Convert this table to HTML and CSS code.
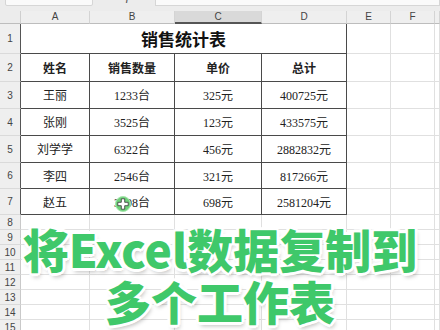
FILE: index.html
```html
<!DOCTYPE html>
<html lang="zh">
<head>
<meta charset="utf-8">
<link rel="stylesheet" href="styles.css">
</head>
<body>
<div class="page">
  <div class="toolbar">
    <div class="namebox">C10</div>
    <div class="tools"><span class="zoomglass">&#x2315;</span><span class="fx">fx</span></div>
    <div class="formula"></div>
  </div>
  <div class="strip"></div>
  <div class="sheet">
    <div class="corner"></div>
    <div class="ch">A</div><div class="ch">B</div><div class="ch sel">C</div><div class="ch">D</div><div class="ch">E</div><div class="ch">F</div><div class="ch"></div>

    <div class="rh t">1</div>
    <div class="tc title">销售统计表</div>
    <div class="c"></div><div class="c"></div><div class="c"></div>

    <div class="rh t">2</div>
    <div class="tc hd">姓名</div><div class="tc hd">销售数量</div><div class="tc hd">单价</div><div class="tc hd">总计</div>
    <div class="c"></div><div class="c"></div><div class="c"></div>

    <div class="rh t">3</div>
    <div class="tc">王丽</div><div class="tc">1233台</div><div class="tc">325元</div><div class="tc">400725元</div>
    <div class="c"></div><div class="c"></div><div class="c"></div>

    <div class="rh t">4</div>
    <div class="tc">张刚</div><div class="tc">3525台</div><div class="tc">123元</div><div class="tc">433575元</div>
    <div class="c"></div><div class="c"></div><div class="c"></div>

    <div class="rh t">5</div>
    <div class="tc">刘学学</div><div class="tc">6322台</div><div class="tc">456元</div><div class="tc">2882832元</div>
    <div class="c"></div><div class="c"></div><div class="c"></div>

    <div class="rh t">6</div>
    <div class="tc">李四</div><div class="tc">2546台</div><div class="tc">321元</div><div class="tc">817266元</div>
    <div class="c"></div><div class="c"></div><div class="c"></div>

    <div class="rh t">7</div>
    <div class="tc">赵五</div><div class="tc">3698台</div><div class="tc">698元</div><div class="tc">2581204元</div>
    <div class="c"></div><div class="c"></div><div class="c"></div>

    <div class="rh">8</div><div class="c"></div><div class="c"></div><div class="c"></div><div class="c"></div><div class="c"></div><div class="c"></div><div class="c"></div>
    <div class="rh">9</div><div class="c"></div><div class="c"></div><div class="c"></div><div class="c"></div><div class="c"></div><div class="c"></div><div class="c"></div>
    <div class="rh">10</div><div class="c"></div><div class="c"></div><div class="c"></div><div class="c"></div><div class="c"></div><div class="c"></div><div class="c"></div>
    <div class="rh">11</div><div class="c"></div><div class="c"></div><div class="c"></div><div class="c"></div><div class="c"></div><div class="c"></div><div class="c"></div>
    <div class="rh">12</div><div class="c"></div><div class="c"></div><div class="c"></div><div class="c"></div><div class="c"></div><div class="c"></div><div class="c"></div>
    <div class="rh">13</div><div class="c"></div><div class="c"></div><div class="c"></div><div class="c"></div><div class="c"></div><div class="c"></div><div class="c"></div>
    <div class="rh">14</div><div class="c"></div><div class="c"></div><div class="c"></div><div class="c"></div><div class="c"></div><div class="c"></div><div class="c"></div>
    <div class="rh">15</div><div class="c"></div><div class="c"></div><div class="c"></div><div class="c"></div><div class="c"></div><div class="c"></div><div class="c"></div>
  </div>

  <svg class="cursor" width="18" height="18" viewBox="0 0 18 18">
    <circle cx="9" cy="9" r="7.5" fill="#6fd27a" stroke="#a8e6ae" stroke-width="1"/>
    <path d="M7.3 3.8h3.4v3.5h3.5v3.4h-3.5v3.5H7.3v-3.5H3.8V7.3h3.5z" fill="#fff" stroke="#333" stroke-width="0.8"/>
  </svg>

  <div class="overlay">
    <div class="line1">将Excel数据复制到</div>
    <div class="line2">多个工作表</div>
  </div>
</div>
</body>
</html>
```

FILE: styles.css
```css
html, body {
  margin: 0;
  padding: 0;
  background: #ffffff;
  overflow: hidden;
}
.page {
  position: relative;
  width: 440px;
  height: 330px;
  overflow: hidden;
  font-family: "Liberation Sans", "Noto Sans CJK SC", sans-serif;
}
.toolbar {
  height: 7px;
  display: flex;
  align-items: flex-end;
  overflow: hidden;
  background: #ececec;
}
.namebox {
  margin-left: 5px;
  width: 88px;
  height: 18px;
  flex: none;
  background: #fafafa;
  border: 1px solid #d6d6d6;
  border-radius: 2px;
  box-sizing: border-box;
  font-size: 11px;
  line-height: 12px;
  text-align: center;
  color: #555;
  margin-bottom: 1px;
}
.tools {
  width: 62px;
  flex: none;
  display: flex;
  justify-content: center;
  gap: 6px;
  font-size: 13px;
  line-height: 13px;
  color: #555;
  height: 18px;
}
.fx {
  font-family: "Liberation Serif", serif;
  font-style: italic;
}
.formula {
  flex: 1;
  height: 18px;
  background: #fafafa;
  border: 1px solid #d6d6d6;
  box-sizing: border-box;
  margin-bottom: 1px;
}
.strip {
  height: 4px;
  background: #ececec;
}
.sheet {
  display: grid;
  grid-template-columns: 21px 69px 85px 87px 85px 44px 44px 1fr;
  grid-template-rows: 13px 30px 28px 27px 27px 27px 26px 26px repeat(8, 15px);
}
.sheet > div {
  box-sizing: border-box;
}
.corner {
  background: #ececec;
  border-right: 1px solid #cfcfcf;
  border-bottom: 1px solid #bdbdbd;
}
.ch {
  background: #efefef;
  border-right: 1px solid #d4d4d4;
  border-bottom: 1px solid #bdbdbd;
  font-size: 10px;
  line-height: 12px;
  text-align: center;
  color: #444;
}
.ch.sel {
  background: #d9d9d9;
  border-bottom: 2px solid #555;
}
.rh {
  background: #efefef;
  border-right: 1px solid #c9c9c9;
  border-bottom: 1px solid #dadada;
  font-size: 10px;
  color: #444;
  display: flex;
  align-items: center;
  justify-content: center;
}
.rh.t {
  border-right: 1px solid #555;
}
.c {
  border-right: 1px solid #e0e0e0;
  border-bottom: 1px solid #e0e0e0;
}
.tc {
  border-right: 1px solid #4a4a4a;
  border-bottom: 1px solid #4a4a4a;
  display: flex;
  align-items: center;
  justify-content: center;
  font-family: "Liberation Serif", "Noto Sans CJK SC", serif;
  font-size: 12px;
  color: #222;
}
.tc.hd {
  font-weight: 700;
  font-size: 12px;
}
.tc.title {
  grid-column: span 4;
  font-weight: 700;
  font-size: 17px;
  color: #111;
}
.cursor {
  position: absolute;
  left: 114px;
  top: 195px;
}
.overlay {
  position: absolute;
  left: 0;
  top: 222px;
  width: 440px;
  text-align: center;
  font-family: "Noto Sans CJK SC", sans-serif;
  font-weight: 900;
  font-size: 46px;
  line-height: 52px;
  color: #3fc86a;
  text-shadow:
    2px 0 0 #fff, -2px 0 0 #fff, 0 2px 0 #fff, 0 -2px 0 #fff,
    2px 2px 0 #fff, -2px -2px 0 #fff, 2px -2px 0 #fff, -2px 2px 0 #fff,
    3px 0 0 #fff, -3px 0 0 #fff, 0 3px 0 #fff, 0 -3px 0 #fff,
    2px 4px 4px rgba(0,0,0,0.25);
}
```
